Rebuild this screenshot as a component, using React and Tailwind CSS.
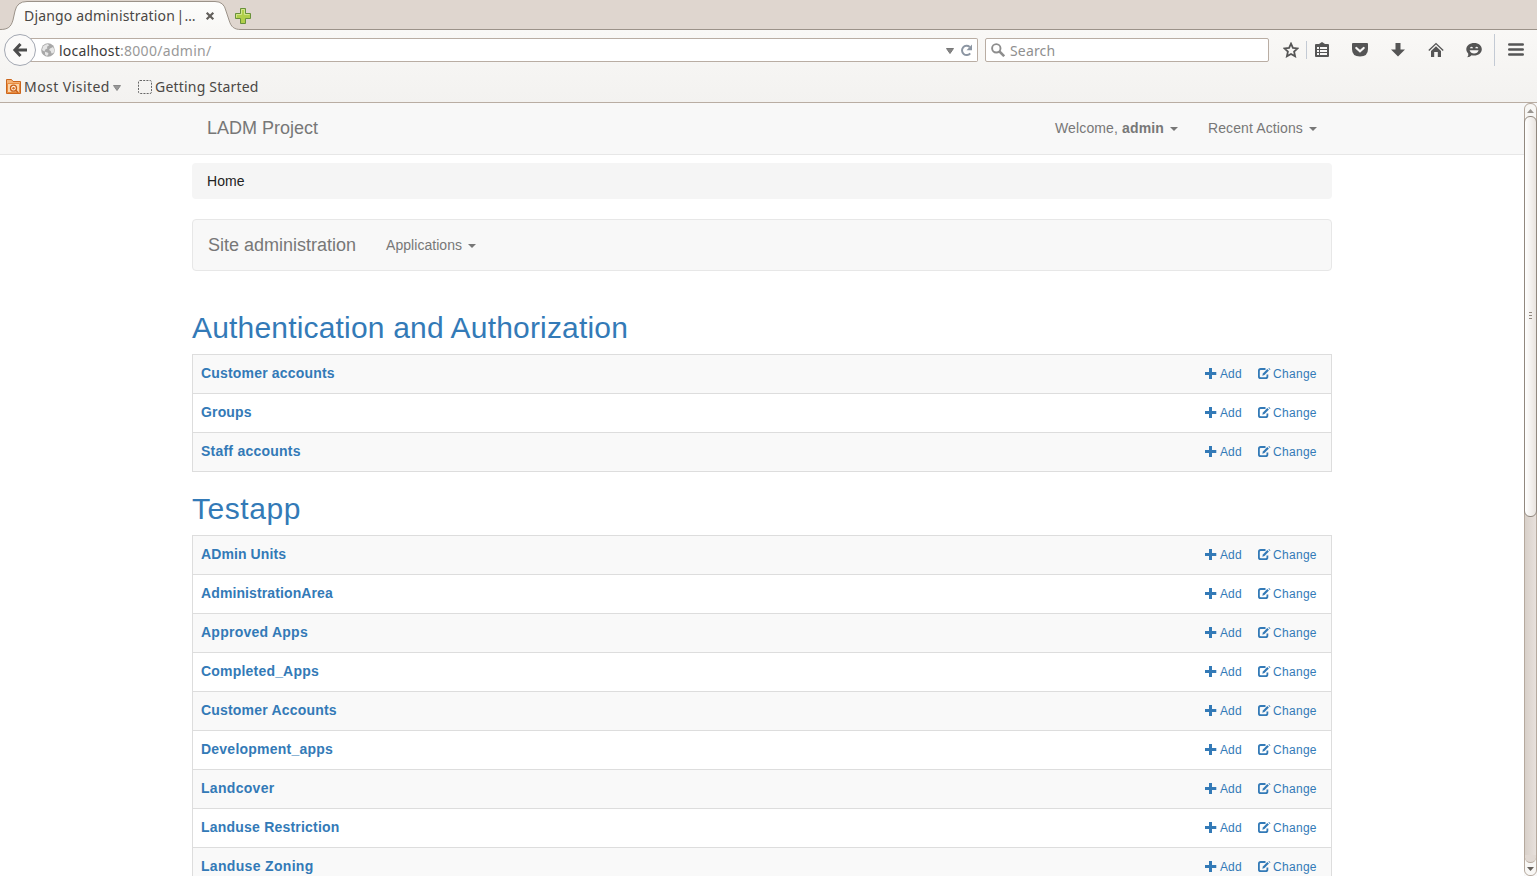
import React from "react";

const LINK = "text-[#337ab7]";

const Caret = ({ className = "" }) => (
  <svg className={`h-1 w-2 shrink-0 ${className}`} viewBox="0 0 8 4" fill="currentColor">
    <path d="M0 0h8L4 4z" />
  </svg>
);

const PlusIcon = () => (
  <svg className="h-3 w-3 shrink-0" viewBox="0 0 12 12" fill="currentColor">
    <path d="M4 0h3v4h4.300v3H7v4H4V7H0V4h4z" />
  </svg>
);

const EditIcon = () => (
  <svg className="h-3 w-[13px] shrink-0" viewBox="0 0 13 12" fill="none">
    <path d="M7.500 1H2.700Q.9 1 .9 2.700v5.700Q.9 10.100 2.700 10.100H7.600Q9.400 10.100 9.400 8.400V6.500" stroke="currentColor" strokeWidth="1.800" />
    <path d="M4.300 7.700l.6-2.300L9.300 1l1.600 1.600L6.500 7.100z" fill="currentColor" />
    <path d="M10.400.500l.7-.5 1.400 1.400-.6.600z" fill="currentColor" />
  </svg>
);

const Heading = ({ children, className = "" }) => (
  <h2 className={`mb-[10px] text-[30px] leading-[33px] ${LINK} ${className}`}>{children}</h2>
);

const ModelTable = ({ rows }) => (
  <div className="border-x border-b border-[#ddd]">
    {rows.map(([name, tracking]) => (
      <div key={name} className={`flex h-[39px] items-center justify-between border-t border-[#ddd] pr-[14px] pl-2 odd:bg-[#f9f9f9] ${LINK}`}>
        <span className={`relative -top-[1px] text-[14px] leading-5 font-bold ${tracking}`}>{name}</span>
        <span className="flex items-center text-[12px] leading-[18px]">
          <PlusIcon />
          <span className="ml-[3px] w-[22px] tracking-[0.1px]">Add</span>
          <span className="ml-[16px] flex"><EditIcon /></span>
          <span className="ml-[2px] w-[44px] whitespace-nowrap tracking-[0.3px]">Change</span>
        </span>
      </div>
    ))}
  </div>
);

const authRows = [
  ["Customer accounts", "tracking-[0.18px]"],
  ["Groups", "tracking-[0.15px]"],
  ["Staff accounts", "tracking-[0.23px]"],
];
const appRows = [
  ["ADmin Units", "tracking-[0.1px]"],
  ["AdministrationArea", "tracking-[0.11px]"],
  ["Approved Apps", "tracking-[0.25px]"],
  ["Completed_Apps", "tracking-[0.2px]"],
  ["Customer Accounts", "tracking-[0.19px]"],
  ["Development_apps", "tracking-[0.23px]"],
  ["Landcover", "tracking-[0.3px]"],
  ["Landuse Restriction", "tracking-[0.21px]"],
  ["Landuse Zoning", "tracking-[0.32px]"],
];

const TabStrip = () => (
  <div className="h-[30px] shrink-0 bg-[#dfd6cf]">
    <div className="relative flex h-[30px] items-center">
      <svg className="absolute top-0 left-0 h-[30px] w-full" viewBox="0 0 1537 30">
        <defs>
          <linearGradient id="tab" x1="0" y1="0" x2="0" y2="1">
            <stop offset="0" stopColor="#fdfdfc" />
            <stop offset="1" stopColor="#f8f7f5" />
          </linearGradient>
        </defs>
        <path d="M0 29.500C8 29.500 11 27 13 20L15 11Q17 1.500 27 1.500H215Q224 1.500 226 11L229 20C231 27 234 29.500 241 29.500V30H0z" fill="url(#tab)" />
        <path d="M0 29.500C8 29.500 11 27 13 20L15 11Q17 1.500 27 1.500H215Q224 1.500 226 11L229 20C231 27 234 29.500 241 29.500H1537" fill="none" stroke="#9b9289" />
      </svg>
      <span className="relative top-px ml-6 w-[172px] whitespace-nowrap text-[14px] leading-5 tracking-[0.17px] text-[#4a4744]">Django administration&#8202;|…</span>
      <svg className="relative top-px ml-[9px] h-[10px] w-[10px]" viewBox="0 0 10 10">
        <path d="M1.700 1.700l6.600 6.600M8.300 1.700l-6.600 6.600" stroke="#625f5b" strokeWidth="2.200" />
      </svg>
      <svg className="relative top-px ml-[20px] h-4 w-4" viewBox="0 0 16 16">
        <path d="M5.500.5h5v5h5v5h-5v5h-5v-5h-5v-5h5z" fill="#b0cf4a" stroke="#68913a" />
        <path d="M1.500 9.500v-3h5v-5h3v5h5" fill="none" stroke="#d3e68c" />
      </svg>
    </div>
  </div>
);

const Divider = ({ className }) => <span className={`w-px shrink-0 bg-[#c3cad4] ${className}`} />;

const ToolbarIcons = () => (
  <div className="flex h-10 items-center text-[#555]">
    <svg className="ml-[14px] h-4 w-4" viewBox="0 0 16 16" fill="none" stroke="currentColor" strokeWidth="1.800">
      <path d="M8 1.700l1.900 4.200 4.700.5-3.500 3.200 1 4.700L8 12l-4.100 2.300 1-4.700-3.500-3.200 4.700-.5z" />
    </svg>
    <Divider className="ml-[7px] h-[18px]" />
    <svg className="ml-[7px] h-4 w-4" viewBox="0 0 16 16" fill="none">
      <path d="M2 2h3l3-2 3 2h3q1 0 1 1v11q0 1-1 1H2q-1 0-1-1V3q0-1 1-1z" fill="currentColor" />
      <path d="M3 5h2v2H3zM6 5h7v2H6zM3 8h2v2H3zM6 8h7v2H6zM3 11h2v2H3zM6 11h7v2H6z" fill="#f8f7f6" />
    </svg>
    <svg className="ml-[22px] h-4 w-4" viewBox="0 0 16 16" fill="none">
      <path d="M1 1h14q1 0 1 1v5q0 7.600-8 7.600T0 7V2q0-1 1-1z" fill="currentColor" />
      <path d="M4.300 6L8 9.300 11.700 6" stroke="#f8f7f6" strokeWidth="2.200" strokeLinecap="round" />
    </svg>
    <svg className="ml-[22px] h-4 w-4" viewBox="0 0 16 16" fill="currentColor">
      <path d="M5.500 1h5v6.500H15l-7 7-7-7h4.500z" />
    </svg>
    <svg className="ml-[22px] h-4 w-4" viewBox="0 0 16 16" fill="none">
      <path d="M.8 8.400L8 1.600l7.200 6.800" stroke="currentColor" strokeWidth="1.400" />
      <path d="M3 9l5-4.800L13 9v6h-3.200v-5H6.200v5H3z" fill="currentColor" />
    </svg>
    <svg className="ml-[22px] h-4 w-4" viewBox="0 0 16 16" fill="none">
      <path d="M8.200 1c4.400 0 7.600 2.700 7.600 6.300s-3.200 6.300-7.600 6.300c-1 0-1.800-.1-2.600-.4Q4 15.200 1.200 15.200q1.600-1.500 1-3.600C1 10.400.3 9 .3 7.300.3 3.700 3.800 1 8.200 1z" fill="currentColor" />
      <path d="M4.500 6.200Q5.500 4.500 6.500 6.200M9.700 6.200q1-1.700 2 0" stroke="#f8f7f6" strokeWidth="1.200" />
      <path d="M3.600 8.300h9Q11.500 11.600 8.100 11.600T3.600 8.300z" fill="#f8f7f6" />
    </svg>
    <Divider className="ml-[12px] h-8" />
    <svg className="ml-[13px] h-4 w-4" viewBox="0 0 16 16" fill="none" stroke="currentColor" strokeWidth="2.600" strokeLinecap="round">
      <path d="M1.300 2.500h13.400M1.300 7.500h13.400M1.300 12.500h13.400" />
    </svg>
  </div>
);

const AddressBar = () => (
  <div className="flex h-10 items-center">
    <div className="relative z-10 ml-1 flex h-8 w-8 shrink-0 items-center justify-center rounded-full border border-[#a3a8b2] bg-[#fbfaf9]">
      <svg className="h-4 w-4" viewBox="0 0 16 16" fill="none" stroke="#4c4c4c" strokeWidth="3">
        <path d="M8.500 2L2.900 8l5.600 6M3 8h12" />
      </svg>
    </div>
    <div className="-ml-[6px] flex h-6 w-[948px] shrink-0 items-center rounded-r-[2px] border border-l-0 border-[#b9ada3] bg-white pl-[11px]">
      <svg className="h-[14px] w-[14px]" viewBox="0 0 14 14">
        <circle cx="7" cy="7" r="6.800" fill="#a8a8a8" />
        <path d="M2 3.500Q4 1 7 1l1 1.500-2 1.300.3 1.700-2 1-.8 2L1 7zM9 5.500l3-1.500 1.500 3-1 3-2 .5-.8-2.500L8 7zM4 8.800l3 1 .5 1.200-1.500 2-2-1.500z" fill="#e6e6e6" />
      </svg>
      <span className="relative top-px ml-[4px] whitespace-nowrap text-[14px] leading-5 text-[#3c3b3a]">
        <span className="tracking-[0.2px]">localhost</span>
        <span className="tracking-[0.300px] text-[#999]">:8000/admin/</span>
      </span>
      <svg className="relative top-px ml-auto h-[6px] w-2" viewBox="0 0 8 6"><path d="M.5.500h7L4 5.500z" fill="#858585" stroke="#777" /></svg>
      <svg className="mr-[4px] ml-[6px] h-[13px] w-[13px]" viewBox="0 0 13 13" fill="none">
        <path d="M9.700 3A4.600 4.600 0 1 0 10.200 9.300" stroke="#8c96a3" strokeWidth="2" />
        <path d="M12 .5v5.700H6.500z" fill="#8c96a3" />
      </svg>
    </div>
    <div className="ml-[7px] flex h-6 w-[284px] shrink-0 items-center rounded-[2px] border border-[#b9ada3] bg-white pl-[5px]">
      <svg className="h-[14px] w-[14px]" viewBox="0 0 14 14" fill="none" stroke="#8d8d8d">
        <circle cx="5.300" cy="5.300" r="4.200" strokeWidth="1.900" />
        <path d="M8.500 8.500l4.700 4.700" strokeWidth="2.500" />
      </svg>
      <span className="relative top-px ml-[5px] text-[14px] leading-5 tracking-[0.15px] text-[#8f8f8f]">Search</span>
    </div>
    <ToolbarIcons />
  </div>
);

const Bookmarks = () => (
  <div className="flex h-[33px] items-center text-[14px] leading-5 text-[#4a4744]">
    <svg className="ml-[6px] h-[15px] w-[15px]" viewBox="0 0 15 15">
      <path d="M.5.500h5l1.500 2h7.500v12H.5z" fill="#f4b174" stroke="#cc661c" />
      <path d="M1.500 4.500h12v9h-12z" fill="#fbd6ac" stroke="#e98b3e" />
      <circle cx="7.500" cy="9.200" r="3" fill="#fff0dd" stroke="#c95f18" strokeWidth="1.300" />
      <circle cx="7.500" cy="9.200" r="1.200" fill="#d86c1c" />
      <path d="M9.500 11l2.500 2.500" stroke="#c95f18" strokeWidth="1.500" />
    </svg>
    <span className="ml-[3px] w-[86px] whitespace-nowrap tracking-[0.45px]">Most Visited</span>
    <svg className="relative top-px ml-[3px] h-[6px] w-2" viewBox="0 0 8 6"><path d="M.5.500h7L4 5.500z" fill="#999" stroke="#888" /></svg>
    <svg className="ml-[17px] h-[14px] w-[14px]" viewBox="0 0 14 14">
      <rect x=".5" y=".5" width="13" height="13" rx="1.500" fill="none" stroke="#666" strokeDasharray="2 1.200" />
    </svg>
    <span className="ml-[3px] whitespace-nowrap tracking-[0.2px]">Getting Started</span>
  </div>
);

const Scrollbar = () => (
  <div className="relative h-full w-[13px] shrink-0 rounded-[6px] border border-[#b5a99e] bg-gradient-to-r from-[#d8d0c9] to-[#e8e1dc]">
    <div className="flex h-[19px] w-full items-start justify-center rounded-t-[6px] bg-[#f8f7f5] pt-[5px]">
      <svg className="h-[4px] w-[7px]" viewBox="0 0 7 4"><path d="M0 4h7L3.500 0z" fill="#9a9590" /></svg>
    </div>
    <div className="absolute top-[12px] -left-px flex h-[401px] w-[13px] flex-col items-center justify-center gap-[2px] rounded-[6px] border border-[#91887f] bg-gradient-to-r from-white to-[#e9e4df] pb-[3px]">
      <span className="h-px w-[3px] bg-[#91887f]" />
      <span className="h-px w-[3px] bg-[#91887f]" />
      <span className="h-px w-[3px] bg-[#91887f]" />
    </div>
    <div className="absolute bottom-0 left-0 flex h-[16px] w-[11px] items-end justify-center rounded-b-[6px] bg-[#f8f7f5] pb-[4px]">
      <svg className="h-[4px] w-[7px]" viewBox="0 0 7 4"><path d="M0 0h7L3.500 4z" fill="#66615c" /></svg>
    </div>
    <div className="absolute bottom-[12px] left-0 h-[8px] w-[11px] rounded-b-[6px] border-b border-[#b5a99e] bg-[#e1d9d3]" />
  </div>
);

const AdminPage = () => (
  <div className="min-w-0 flex-1 overflow-hidden bg-white font-['Liberation_Sans',Arial,sans-serif] text-[14px] text-[#777]">
    <nav className="flex h-[52px] justify-center border-b border-[#e7e7e7] bg-[#f8f8f8]">
      <div className="flex w-[1140px] items-center pr-[15px] pb-px pl-[15px]">
        <span className="text-[18px] leading-5">LADM Project</span>
        <span className="ml-auto flex items-center leading-5">
          <span className="w-[109px] whitespace-nowrap tracking-[0.13px]">Welcome, <b>admin</b></span>
          <Caret className="mt-px ml-[6px]" />
        </span>
        <span className="ml-[30px] flex items-center leading-5">
          <span className="w-[95px] whitespace-nowrap tracking-[0.11px]">Recent Actions</span>
          <Caret className="mt-px ml-[6px]" />
        </span>
      </div>
    </nav>
    <main className="mx-auto w-[1140px]">
      <div className="mt-2 flex h-9 items-center rounded-[4px] bg-[#f5f5f5] px-[15px] tracking-[0.1px] text-[#222]">Home</div>
      <div className="mt-5 flex h-[52px] items-center rounded-[4px] border border-[#e7e7e7] bg-[#f8f8f8] pl-[15px]">
        <span className="w-[148px] whitespace-nowrap text-[18px] leading-5">Site administration</span>
        <span className="ml-[30px] w-[76px] leading-5 tracking-[0.05px]">Applications</span>
        <Caret className="mt-px ml-[6px]" />
      </div>
      <Heading className="mt-[40px] tracking-[0.18px]">Authentication and Authorization</Heading>
      <ModelTable rows={authRows} />
      <Heading className="mt-5 tracking-[0.55px]">Testapp</Heading>
      <ModelTable rows={appRows} />
    </main>
  </div>
);

export default function App() {
  return (
    <div className="flex h-[876px] w-[1537px] flex-col overflow-hidden bg-white font-['Noto_Sans',sans-serif]">
      <TabStrip />
      <div className="h-[73px] shrink-0 border-b border-[#b9ada3] bg-gradient-to-b from-[#f9f8f6] to-[#f3f2f0]">
        <AddressBar />
        <Bookmarks />
      </div>
      <div className="flex min-h-0 flex-1 bg-[#f8f8f8]">
        <AdminPage />
        <Scrollbar />
      </div>
    </div>
  );
}
